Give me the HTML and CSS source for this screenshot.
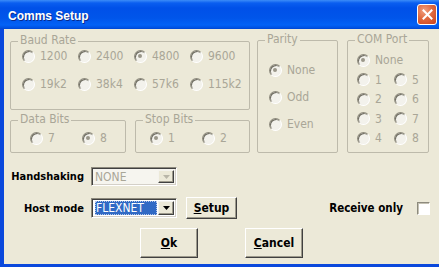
FILE: index.html
```html
<!DOCTYPE html>
<html>
<head>
<meta charset="utf-8">
<link rel="stylesheet" href="styles.css">
</head>
<body>
<div class="window">
  <div class="titlebar">
    <span class="title">Comms Setup</span>
    <span class="close"><svg width="11" height="11" viewBox="0 0 11 11"><path d="M1.5 1.5L9.5 9.5M9.5 1.5L1.5 9.5" stroke="#fff" stroke-width="2" stroke-linecap="square"/></svg></span>
  </div>
  <div class="frame">
    <div class="client">
      <div class="groups">
        <div class="leftcol">
          <div class="group baud">
            <span class="legend">Baud Rate</span>
            <div class="baud-grid">
              <div class="opt"><span class="radio"></span>1200</div>
              <div class="opt"><span class="radio"></span>2400</div>
              <div class="opt"><span class="radio on"></span>4800</div>
              <div class="opt"><span class="radio"></span>9600</div>
              <div class="opt"><span class="radio"></span>19k2</div>
              <div class="opt"><span class="radio"></span>38k4</div>
              <div class="opt"><span class="radio"></span>57k6</div>
              <div class="opt"><span class="radio"></span>115k2</div>
            </div>
          </div>
          <div class="bits">
            <div class="group databits">
              <span class="legend">Data Bits</span>
              <div class="pair">
                <div class="opt"><span class="radio"></span>7</div>
                <div class="opt"><span class="radio on"></span>8</div>
              </div>
            </div>
            <div class="group stopbits">
              <span class="legend">Stop Bits</span>
              <div class="pair">
                <div class="opt"><span class="radio on"></span>1</div>
                <div class="opt"><span class="radio"></span>2</div>
              </div>
            </div>
          </div>
        </div>
        <div class="group parity">
          <span class="legend">Parity</span>
          <div class="parity-list">
            <div class="opt"><span class="radio on"></span>None</div>
            <div class="opt"><span class="radio"></span>Odd</div>
            <div class="opt"><span class="radio"></span>Even</div>
          </div>
        </div>
        <div class="group com">
          <span class="legend">COM Port</span>
          <div class="com-grid">
            <div class="opt wide"><span class="radio on"></span>None</div>
            <div class="opt"><span class="radio"></span>1</div>
            <div class="opt"><span class="radio"></span>5</div>
            <div class="opt"><span class="radio"></span>2</div>
            <div class="opt"><span class="radio"></span>6</div>
            <div class="opt"><span class="radio"></span>3</div>
            <div class="opt"><span class="radio"></span>7</div>
            <div class="opt"><span class="radio"></span>4</div>
            <div class="opt"><span class="radio"></span>8</div>
          </div>
        </div>
      </div>

      <div class="row hs">
        <span class="lbl">Handshaking</span>
        <div class="combo disabled">
          <span class="val">NONE</span>
          <span class="drop"><svg width="7" height="4" viewBox="0 0 7 4"><path d="M0 0H7L3.5 4Z" fill="#b9b6a8"/></svg></span>
        </div>
      </div>

      <div class="row host">
        <span class="lbl">Host mode</span>
        <div class="combo">
          <span class="val"><span class="sel">FLEXNET</span></span>
          <span class="drop"><svg width="7" height="4" viewBox="0 0 7 4"><path d="M0 0H7L3.5 4Z" fill="#000"/></svg></span>
        </div>
        <div class="btn setup"><u>S</u>etup</div>
        <span class="recv">Receive only</span>
        <span class="check"></span>
      </div>

      <div class="actions">
        <div class="btn big"><u>O</u>k</div>
        <div class="btn big"><u>C</u>ancel</div>
      </div>
    </div>
  </div>
</div>
</body>
</html>
```

FILE: styles.css
```css
* { box-sizing: border-box; }
html, body { margin: 0; padding: 0; background: #ECE9D8; }
body { font-family: "DejaVu Sans Condensed", "Liberation Sans", Arial, sans-serif; font-size: 12px; }

.window { width: 439px; height: 267px; display: flex; flex-direction: column; overflow: hidden; }

.titlebar {
  height: 29px; flex: none;
  display: flex; align-items: center; justify-content: space-between;
  padding: 2px 2px 0 8px;
  background: linear-gradient(to bottom, #3c8cf8 0px, #0a5ef0 3px, #0050e8 8px, #0055ea 18px, #0362f6 25px, #0050e0 28px, #0045d0 29px);
}
.title { color: #fff; font-family: "Liberation Sans", Arial, sans-serif; font-weight: bold; font-size: 12px; text-shadow: 1px 1px 0 #0a2a8a; }
.close {
  width: 20px; height: 21px; border: 1px solid #fff; border-radius: 3px;
  background: radial-gradient(circle at 35% 30%, #f0a080 0%, #e06a40 45%, #c8401c 100%);
  display: flex; align-items: center; justify-content: center;
  margin-top: -3px;
}

.frame { flex: 1; display: flex; border-left: 4px solid #0a48dc; border-bottom: 3px solid #0a48dc; }
.client { flex: 1; background: #ECE9D8; padding: 12px 0 0 6px; color: #000; }

.groups { display: flex; align-items: flex-start; }
.leftcol { width: 240px; display: flex; flex-direction: column; }

.group { position: relative; border: 1px solid #bdbaab; border-radius: 2px; color: #a9a697; }
.legend {
  position: absolute; top: -9px; left: 7px; padding: 0 2px;
  background: #ECE9D8; line-height: 14px; color: #a9a697;
}

.opt { display: flex; align-items: center; gap: 5px; height: 14px; white-space: nowrap; color: #a9a697; }
.radio {
  flex: none; width: 13px; height: 13px; border-radius: 50%;
  border: 1px solid; border-color: #8e8b7d #ffffff #ffffff #8e8b7d;
  box-shadow: inset 1px 1px 0 #6f6d62;
  background: #f3f2ec; position: relative;
}
.radio.on::after {
  content: ""; position: absolute; left: 3px; top: 3px; width: 4px; height: 4px;
  border-radius: 50%; background: #9a978a;
}

.baud { height: 69px; padding: 7px 0 0 11px; }
.baud-grid { display: grid; grid-template-columns: repeat(4, 56px); grid-auto-rows: 14px; row-gap: 14px; }

.bits { display: flex; gap: 9px; margin-top: 10px; }
.databits { width: 116px; height: 33px; padding: 10px 0 0 19px; }
.stopbits { width: 115px; height: 33px; padding: 10px 0 0 14px; }
.pair { display: grid; grid-template-columns: 52px 52px; }

.parity { width: 81px; height: 113px; margin-left: 7px; margin-top: -1px; padding: 22px 0 0 11px; }
.parity-list { display: flex; flex-direction: column; gap: 13px; }

.com { width: 82px; height: 113px; margin-left: 9px; margin-top: -1px; padding: 12px 0 0 9px; }
.com-grid { display: grid; grid-template-columns: 37px 30px; grid-auto-rows: 14px; row-gap: 5.5px; }
.com-grid .wide { grid-column: 1 / 3; }

.row { display: flex; align-items: center; }
.lbl { width: 74px; text-align: right; font-weight: bold; color: #000; margin-right: 7px; font-size: 11px; }
.hs { height: 19px; margin-top: 14px; }
.host { height: 22px; margin-top: 11px; padding-right: 9px; }

.combo {
  width: 86px; height: 19px; display: flex; align-items: stretch;
  border: 1px solid; border-color: #8d8a7d #ffffff #ffffff #8d8a7d;
  box-shadow: inset 1px 1px 0 #404040, inset -1px -1px 0 #d4d0c8;
  background: #fff; padding: 2px;
}
.combo.disabled { background: #f6f5ef; }
.host .combo { height: 20px; }
.val { flex: 1; display: flex; align-items: center; color: #000; padding-left: 1px; }
.disabled .val { color: #a9a697; }
.sel { background: #316ac5; color: #fff; height: 100%; width: 62px; display: flex; align-items: center; padding-left: 1px; outline: 1px dotted #b8c8e8; outline-offset: -1px; }
.drop {
  width: 16px; flex: none; display: flex; align-items: center; justify-content: center;
  background: #ECE9D8;
  border: 1px solid; border-color: #f4f3ee #404040 #404040 #f4f3ee;
  box-shadow: inset -1px -1px 0 #9d9a8c;
}

.btn {
  display: flex; align-items: center; justify-content: center;
  background: #ECE9D8; color: #000; font-weight: bold; font-size: 12px;
  border: 1px solid; border-color: #ffffff #404040 #404040 #ffffff;
  box-shadow: inset -1px -1px 0 #9d9a8c;
}
.setup { width: 51px; height: 22px; margin-left: 9px; }
.recv { margin-left: auto; font-weight: bold; font-size: 11.5px; margin-right: 14px; }
.check {
  width: 13px; height: 13px; background: #fff;
  border: 1px solid; border-color: #8d8a7d #ffffff #ffffff #8d8a7d;
  box-shadow: inset 1px 1px 0 #c4c1b3;
}

.actions { display: flex; justify-content: center; gap: 47px; margin-top: 9px; padding-right: 6px; }
.big { width: 58px; height: 30px; }
```
